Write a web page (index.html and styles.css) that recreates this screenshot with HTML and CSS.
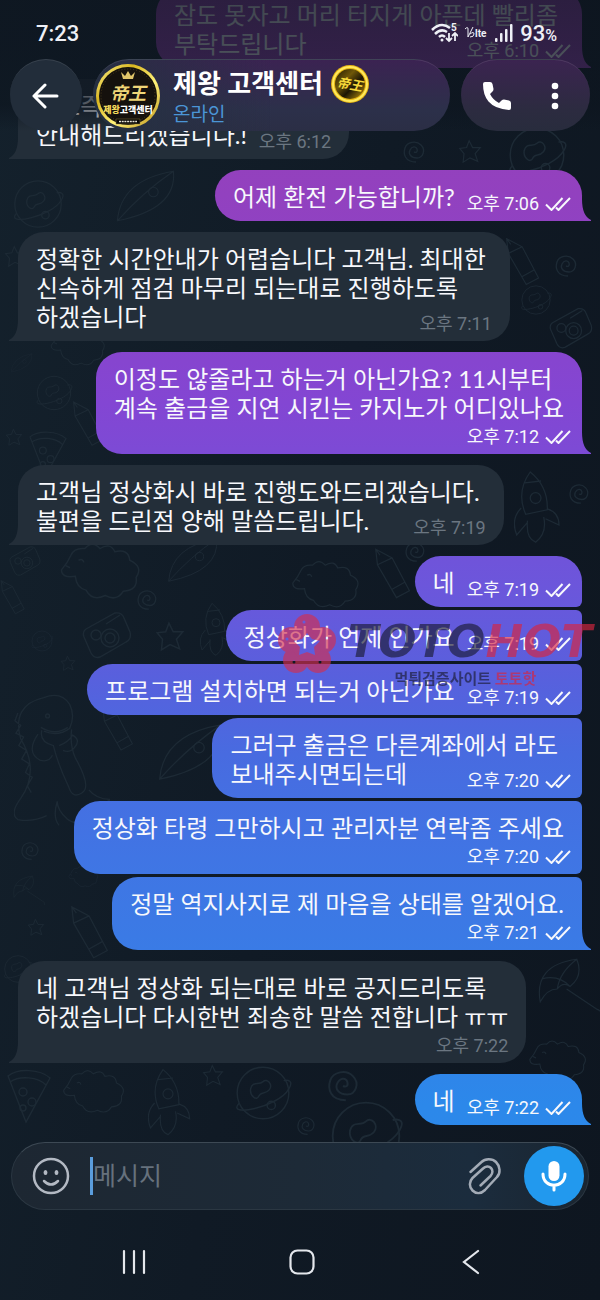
FILE: index.html
```html
<!DOCTYPE html>
<html lang="ko">
<head>
  <meta charset="UTF-8" />
  <meta name="viewport" content="width=device-width, initial-scale=1" />
  <title>제왕 고객센터</title>
  <link rel="stylesheet" href="styles.css">
</head>
<body>

<!-- Shared shapes -->
<svg class="defs" width="0" height="0" aria-hidden="true">
  <symbol id="ticks" viewBox="0 0 26 14">
    <path d="M1 7.500l5.500 5.500L17.500 1M11 10.500l2.500 2.500L25 1" fill="none" stroke="currentColor" stroke-width="2"/>
  </symbol>
  <symbol id="star" viewBox="0 0 28 28">
    <path d="M13 2l4 8 9 0-6 7 3 9-9-4-8 5 1-10-5-6 8-1z"/>
  </symbol>
  <symbol id="swirl" viewBox="0 0 24 24">
    <path d="M14 22C3 22 1 14 3 8s11-8 16-3 2 13-4 13-9-4-7-8 6-4 7-1-1 4-3 3"/>
  </symbol>
  <symbol id="pizza" viewBox="0 0 46 56">
    <path d="M2 8C12 0 34 1 44 10L20 54zM4 14c10-7 28-5 36 3"/><circle cx="17" cy="24" r="4"/><circle cx="26" cy="34" r="4"/><circle cx="17" cy="40" r="3"/>
  </symbol>
  <symbol id="pencil" viewBox="0 0 44 66">
    <path d="M2 2l2 18 22 38 15-8-20-38zM4 20l17-8M20 49l16-9M2 2l5 7"/>
  </symbol>
  <symbol id="planet" viewBox="0 0 60 56">
    <circle cx="30" cy="28" r="25"/><path d="M7 38c-14 14 38 4 48-14 5-8-1-9-5-8M18 24c2-8 8-3 12-7s10 3 6 8-8 1-10 6-9 0-8-7"/><circle cx="38" cy="40" r="4"/>
  </symbol>
  <symbol id="camera" viewBox="0 0 52 50">
    <path d="M5 19L34 3q7-1 9 5l6 14q2 7-4 10L19 47q-6 2-9-4L3 27q-2-5 2-8zM25 14l14-9"/><circle cx="15" cy="25" r="5"/><circle cx="29" cy="28" r="9"/><circle cx="29" cy="28" r="5"/>
  </symbol>
  <symbol id="sheep" viewBox="0 0 80 60">
    <path d="M24 8q7-8 14 0 10-6 14 3 13-3 14 8 13 6 6 16 2 12-12 13-6 10-17 4-12 6-18-5-9-2-10-13-13 2-13-6 6-7 9-14 3-7 13-6zM10 26l-4-2M18 19q4-2 5 2"/>
  </symbol>
  <symbol id="umbrella" viewBox="0 0 80 80">
    <path d="M5 55Q-3 12 48 5q8 20-8 32-8-6-15 3-12 0-20 15zM25 40Q28 20 48 5M7 28q20-5 33 9M36 40l36 24q8 3 4 9"/>
  </symbol>
  <symbol id="rocket" viewBox="0 0 60 84">
    <path d="M18 2Q2 24 13 49l24-5Q38 18 18 2zM8 42Q-4 54 3 72l12-14M37 43q13 4 13 18l-15-7M12 14l18-2M15 56q-2 20 9 24 13-10 9-28"/><circle cx="24" cy="31" r="6"/>
  </symbol>
  <symbol id="dino" viewBox="0 0 100 140">
    <path d="M31 4q18-7 27 7 6 12 0 25-12 9-27 3M7 109q20-29 0-62Q-3 12 31 4M4 20l-3 8 6 5-5 8 8 4-5 9 8 5-5 9 8 5-4 9 7 5-5 9 4 7M29 38q-3 12 12 16 5 20 16 43 4 13 14 6 10-6-7-36-6-13-4-30M47 54q10-4 14-11 9 5 2 13-5 6-12 3M25 42Q12 61 27 69q9 3 13-5M78 100q8 10 23 10-15 8-25 13-7 18-21 7-10-9-10-18-5 17 2 25M7 109q-12 16-3 22 16 3 30-4"/><circle cx="35" cy="23" r="2"/><path d="M28 35q15 9 28 0"/>
  </symbol>
  <symbol id="leaf" viewBox="0 0 80 70">
    <path d="M3 66Q7 15 73 4q5 47-70 62zM3 66q32-36 70-62"/><circle cx="48" cy="30" r="6"/>
  </symbol>
</svg>

<div class="screen">

  <!-- Wallpaper doodles -->
  <svg class="wallpaper" viewBox="0 0 600 1300" preserveAspectRatio="xMidYMid slice" aria-hidden="true">
    <use href="#planet" x="500" y="125" width="74" height="60"/>
    <use href="#star" x="458" y="139" width="24" height="24"/>
    <use href="#swirl" x="400" y="140" width="28" height="24"/>
    <use href="#planet" x="8" y="178" width="60" height="52"/>
    <use href="#leaf" x="112" y="168" width="70" height="56"/>
    <use href="#star" x="4" y="245" width="22" height="22"/>
    <use href="#pencil" x="505" y="235" width="36" height="58"/>
    <use href="#swirl" x="554" y="254" width="24" height="24"/>
    <use href="#planet" x="519" y="284" width="34" height="32"/>
    <use href="#camera" x="548" y="306" width="46" height="44"/>
    <use href="#sheep" x="34" y="325" width="90" height="44"/>
    <use href="#leaf" x="10" y="352" width="24" height="22"/>
    <use href="#planet" x="34" y="373" width="40" height="40"/>
    <use href="#star" x="5" y="428" width="18" height="18"/>
    <use href="#pizza" x="24" y="430" width="48" height="48"/>
    <use href="#pencil" x="72" y="395" width="34" height="62"/>
    <use href="#rocket" x="514" y="468" width="54" height="80"/>
    <use href="#swirl" x="568" y="482" width="22" height="24"/>
    <use href="#camera" x="8" y="545" width="34" height="32"/>
    <use href="#sheep" x="54" y="540" width="96" height="64"/>
    <use href="#leaf" x="152" y="536" width="84" height="48"/>
    <use href="#sheep" x="288" y="558" width="78" height="54"/>
    <use href="#pencil" x="374" y="545" width="38" height="62"/>
    <use href="#swirl" x="404" y="541" width="22" height="22"/>
    <use href="#swirl" x="136" y="588" width="22" height="24"/>
    <use href="#pencil" x="0" y="572" width="26" height="54"/>
    <use href="#camera" x="80" y="610" width="54" height="50"/>
    <use href="#star" x="155" y="621" width="30" height="30"/>
    <use href="#planet" x="30" y="624" width="24" height="34"/>
    <use href="#star" x="60" y="655" width="16" height="16"/>
    <use href="#rocket" x="200" y="596" width="40" height="68"/>
    <use href="#dino" x="14" y="692" width="96" height="138"/>
    <use href="#pencil" x="94" y="706" width="48" height="50"/>
    <use href="#leaf" x="157" y="716" width="70" height="72"/>
    <use href="#swirl" x="20" y="840" width="20" height="22"/>
    <use href="#umbrella" x="8" y="874" width="42" height="34"/>
    <use href="#sheep" x="68" y="860" width="32" height="34"/>
    <use href="#pencil" x="68" y="905" width="44" height="60"/>
    <use href="#star" x="27" y="918" width="18" height="18"/>
    <use href="#planet" x="2" y="952" width="32" height="34"/>
    <use href="#umbrella" x="536" y="953" width="68" height="72"/>
    <use href="#sheep" x="520" y="1038" width="78" height="46"/>
    <use href="#pizza" x="6" y="1068" width="46" height="56"/>
    <use href="#sheep" x="62" y="1062" width="66" height="60"/>
    <use href="#rocket" x="148" y="1066" width="50" height="74"/>
    <use href="#star" x="202" y="1064" width="22" height="22"/>
    <use href="#planet" x="232" y="1064" width="62" height="58"/>
    <use href="#swirl" x="326" y="1066" width="34" height="40"/>
    <use href="#planet" x="326" y="1098" width="80" height="76"/>
    <use href="#swirl" x="296" y="1116" width="20" height="20"/>
  </svg>

  <!-- Messages -->
  <main class="chat">
    <div class="bubble out tail overlap first">
      <p class="text">잠도 못자고 머리 터지게 아픈데 빨리좀<br>부탁드립니다</p>
      <span class="meta">오후 6:10 <svg class="ticks"><use href="#ticks"/></svg></span>
    </div>
    <div class="bubble in tail first">
      <p class="text">완료즉시<br>안내해드리겠습니다.!</p>
      <span class="meta">오후 6:12</span>
    </div>
    <div class="bubble out tail first">
      <p class="text">어제 환전 가능합니까?</p>
      <span class="meta">오후 7:06 <svg class="ticks"><use href="#ticks"/></svg></span>
    </div>
    <div class="bubble in tail overlap first">
      <p class="text">정확한 시간안내가 어렵습니다 고객님. 최대한<br>신속하게 점검 마무리 되는대로 진행하도록<br>하겠습니다</p>
      <span class="meta">오후 7:11</span>
    </div>
    <div class="bubble out tail below first">
      <p class="text">이정도 않줄라고 하는거 아닌가요? 11시부터<br>계속 출금을 지연 시킨는 카지노가 어디있나요</p>
      <span class="meta">오후 7:12 <svg class="ticks"><use href="#ticks"/></svg></span>
    </div>
    <div class="bubble in tail overlap first">
      <p class="text">고객님 정상화시 바로 진행도와드리겠습니다.<br>불편을 드린점 양해 말씀드립니다.</p>
      <span class="meta">오후 7:19</span>
    </div>
    <div class="bubble out first">
      <p class="text">네</p>
      <span class="meta">오후 7:19 <svg class="ticks"><use href="#ticks"/></svg></span>
    </div>
    <div class="bubble out">
      <p class="text">정상화가 언제 인가요</p>
      <span class="meta">오후 7:19 <svg class="ticks"><use href="#ticks"/></svg></span>
    </div>
    <div class="bubble out">
      <p class="text">프로그램 설치하면 되는거 아닌가요</p>
      <span class="meta">오후 7:19 <svg class="ticks"><use href="#ticks"/></svg></span>
    </div>
    <div class="bubble out overlap">
      <p class="text">그러구 출금은 다른계좌에서 라도<br>보내주시면되는데</p>
      <span class="meta">오후 7:20 <svg class="ticks"><use href="#ticks"/></svg></span>
    </div>
    <div class="bubble out below">
      <p class="text">정상화 타령 그만하시고 관리자분 연락좀 주세요</p>
      <span class="meta">오후 7:20 <svg class="ticks"><use href="#ticks"/></svg></span>
    </div>
    <div class="bubble out tail below">
      <p class="text">정말 역지사지로 제 마음을 상태를 알겠어요.</p>
      <span class="meta">오후 7:21 <svg class="ticks"><use href="#ticks"/></svg></span>
    </div>
    <div class="bubble in tail below first">
      <p class="text">네 고객님 정상화 되는대로 바로 공지드리도록<br>하겠습니다 다시한번 죄송한 말씀 전합니다 ㅠㅠ</p>
      <span class="meta">오후 7:22</span>
    </div>
    <div class="bubble out tail first">
      <p class="text">네</p>
      <span class="meta">오후 7:22 <svg class="ticks"><use href="#ticks"/></svg></span>
    </div>
  </main>

  <!-- Watermark -->
  <div class="watermark">
    <svg class="flower" viewBox="0 0 60 62" aria-hidden="true">
      <mask id="petal-hole">
        <rect width="60" height="62" fill="#fff"/>
        <path d="M30 20l5 6 8 2-6 6 1 8-8-3-8 3 1-8-6-6 8-2z" fill="#000"/>
        <circle cx="27" cy="9" r="1.500" fill="#000"/><circle cx="50" cy="25" r="1.500" fill="#000"/><circle cx="43" cy="49" r="1.500" fill="#000"/><circle cx="17" cy="49" r="1.500" fill="#000"/><circle cx="10" cy="26" r="1.500" fill="#000"/>
      </mask>
      <g mask="url(#petal-hole)">
        <circle cx="30" cy="14" r="13"/><circle cx="46" cy="27" r="13"/><circle cx="41" cy="47" r="13"/><circle cx="19" cy="47" r="13"/><circle cx="14" cy="27" r="13"/><circle cx="30" cy="33" r="14"/>
      </g>
    </svg>
    <div class="brand">
      <strong>TOTO<em>HOT</em></strong>
      <span>먹튀검증사이트 <em>토토핫</em></span>
    </div>
  </div>

  <!-- Status bar and chat header -->
  <header class="top">
    <div class="status">
      <span class="clock">7:23</span>
      <svg width="27" height="20" viewBox="0 0 27 20" fill="none" stroke="#eef0f6" aria-hidden="true">
        <path d="M1 7Q10-2 19 5M4 11q6-6 12-2M8 14q3-3 6 0" stroke-width="2.500"/>
        <circle cx="11" cy="17" r="1.500" fill="#eef0f6" stroke="none"/>
        <path d="M18 10v8m-3-3l3 3 3-3M24 18v-8m-3 3l3-3 3 3" stroke-width="1.800"/>
        <text x="20" y="8" class="tiny">5</text>
      </svg>
      <svg width="24" height="14" viewBox="0 0 24 14" aria-hidden="true">
        <path d="M1 3q3-3 3 0v8L9 1M6 8q4-3 4 0t-4 3" fill="none" stroke="#eef0f6"/>
        <text x="11" y="11" class="tiny">lte</text>
      </svg>
      <svg width="20" height="20" viewBox="0 0 20 20" fill="#eef0f6" aria-hidden="true">
        <rect x="1" y="15" width="2.500" height="4" rx="1"/><rect x="6" y="10" width="2.500" height="9" rx="1"/><rect x="11" y="6" width="2.500" height="13" rx="1"/><rect x="16" y="1" width="2.500" height="18" rx="1"/>
      </svg>
      <span class="battery">93<small>%</small></span>
    </div>

    <div class="header">
      <button class="pill back" aria-label="뒤로">
        <svg width="28" height="26" viewBox="0 0 28 26" fill="none" stroke="#fff" stroke-width="3" stroke-linecap="round" stroke-linejoin="round"><path d="M13 2L2 13l11 11M2 13h23"/></svg>
      </button>
      <div class="pill profile">
        <svg class="avatar" viewBox="0 0 64 64" aria-hidden="true">
          <defs>
            <linearGradient id="gold" x1="0" y1="0" x2="1" y2="1"><stop offset="0" stop-color="#fff79a"/><stop offset=".3" stop-color="#d9b51f"/><stop offset=".6" stop-color="#fff27a"/><stop offset="1" stop-color="#b98d13"/></linearGradient>
          </defs>
          <circle cx="32" cy="32" r="32" fill="url(#gold)"/>
          <circle cx="32" cy="32" r="29" fill="#15110d"/>
          <circle cx="32" cy="32" r="27" fill="none" stroke="#4a3b1c" stroke-dasharray="1 2"/>
          <path d="M27 15l-2-7 4 4 3-5 3 5 4-4-2 7z" fill="#e0c56a"/>
          <text x="32" y="36" class="hanja">帝王</text>
          <text x="32" y="49" class="seal"><tspan class="seal-gold">제왕</tspan>고객센터</text>
          <path d="M20 55h24v5H20z" fill="#050505" stroke="#8b7a42" stroke-width=".5"/>
          <path d="M23 57.500h18" stroke="#e8e4d8" stroke-width="1.500" stroke-dasharray="2 .7"/>
        </svg>
        <div class="who">
          <h1>제왕 고객센터
            <svg class="coin" viewBox="0 0 38 38" aria-hidden="true">
              <defs><linearGradient id="coin-face" x1="0" y1="0" x2="1" y2="1"><stop offset="0" stop-color="#1d1604"/><stop offset=".35" stop-color="#6f5708"/><stop offset=".6" stop-color="#1d1604"/><stop offset="1" stop-color="#c79c0d"/></linearGradient></defs>
              <circle cx="19" cy="19" r="19" fill="#e4b312"/>
              <circle cx="19" cy="19" r="17" fill="none" stroke="#ffe95c" stroke-width="2"/>
              <circle cx="19" cy="19" r="15" fill="url(#coin-face)"/>
              <text x="19" y="24" class="coin-text" transform="rotate(10 19 19)">帝王</text>
            </svg>
          </h1>
          <p>온라인</p>
        </div>
      </div>
      <div class="pill actions">
        <button aria-label="전화">
          <svg width="28" height="28" viewBox="0 0 28 28" fill="#fff"><path d="M2 0h5q2 0 2.500 2l1 5q0 1.500-1 2.500L7 12q3 6 9 9l2.500-2.500q1-1 2.500-1l5 1q2 .5 2 2.500v5q0 2-2 2Q12 27 5.500 19.500 0 13 0 2q0-2 2-2z"/></svg>
        </button>
        <button aria-label="메뉴">
          <svg width="8" height="28" viewBox="0 0 8 28" fill="#fff"><circle cx="4" cy="4" r="3.300"/><circle cx="4" cy="14" r="3.300"/><circle cx="4" cy="24" r="3.300"/></svg>
        </button>
      </div>
    </div>
  </header>

  <!-- Composer -->
  <form class="composer">
    <button type="button" aria-label="이모티콘">
      <svg width="38" height="38" viewBox="0 0 38 38" fill="none" stroke="#b3b9c3" stroke-width="2.500" stroke-linecap="round"><circle cx="19" cy="19" r="17"/><path d="M12 24q7 7 14 0"/><ellipse cx="13.500" cy="15.500" rx="1.200" ry="1.800" fill="#b3b9c3" stroke-width="1.500"/><ellipse cx="24.500" cy="15.500" rx="1.200" ry="1.800" fill="#b3b9c3" stroke-width="1.500"/></svg>
    </button>
    <span class="caret"></span>
    <input type="text" placeholder="메시지" aria-label="메시지">
    <button type="button" class="attach" aria-label="첨부">
      <svg width="34" height="38" viewBox="0 0 34 38" fill="none" stroke="#a3abb6" stroke-width="2.500" stroke-linecap="round"><path d="M2.500 15L13.500 5C17 1.500 24 1 28 5s5 11 1 15L17 33c-4 4-9 4-12.500.500s-3.500-9 0-12.500L15 11.500c2.500-2.500 6-2.500 8-.500s2 5.500-.5 8L12.500 28.500"/></svg>
    </button>
    <button type="button" class="mic" aria-label="음성 메시지">
      <svg width="26" height="32" viewBox="0 0 26 32"><rect x="7.500" y="1" width="11" height="20" rx="5.500" fill="#fff"/><path d="M2 14c0 15 22 15 22 0M13 25v5" fill="none" stroke="#fff" stroke-width="3" stroke-linecap="round"/></svg>
    </button>
  </form>

  <!-- System navigation -->
  <nav class="nav">
    <button aria-label="최근 앱"><svg width="24" height="26" viewBox="0 0 24 26" stroke="#e4e7ec" stroke-width="2.200" stroke-linecap="round"><path d="M2 2v22M12 2v22M22 2v22"/></svg></button>
    <button aria-label="홈"><svg width="26" height="26" viewBox="0 0 26 26" fill="none" stroke="#e4e7ec" stroke-width="2.200"><rect x="1.500" y="1.500" width="23" height="23" rx="7"/></svg></button>
    <button aria-label="뒤로 가기"><svg width="18" height="26" viewBox="0 0 18 26" fill="none" stroke="#e4e7ec" stroke-width="2.200" stroke-linecap="round"><path d="M16 2L2 13l14 11"/></svg></button>
  </nav>
</div>

</body>
</html>
```
FILE: styles.css
```css
* {
  box-sizing: border-box;
}
html, body {
  margin: 0;
  padding: 0;
  height: 100%;
  font-family: Roboto, "Noto Sans CJK KR", sans-serif;
  background-color: #111923;
}
button {
  display: flex;
  align-items: center;
  justify-content: center;
  padding: 0;
  border: none;
  background: none;
  color: inherit;
}
svg {
  display: block;
  flex-shrink: 0;
}
p, h1 {
  margin: 0;
}
.defs {
  position: absolute;
}
.screen {
  position: relative;
  display: flex;
  flex-direction: column;
  height: 100vh;
  overflow: hidden;
  background: linear-gradient(100deg, #14212c, #101a25 50%, #0e1620);
}
.wallpaper {
  position: absolute;
  inset: 0;
  width: 100%;
  height: 100%;
  fill: none;
  stroke: #1d2a35;
  stroke-width: 1.4;
}

/* Messages */
.chat {
  position: relative;
  flex: 1;
  min-height: 0;
  display: flex;
  flex-direction: column;
  justify-content: flex-end;
  padding: 0 18px 17px;
  gap: 3px;
}
.bubble {
  position: relative;
  display: flex;
  align-items: flex-end;
  flex-shrink: 0;
  gap: 12px;
  padding: 12px 18px 6px;
  border-radius: 26px;
  color: #f7f8fc;
}
.first {
  margin-top: 8px;
}
.in {
  align-self: flex-start;
  border-bottom-left-radius: 6px;
  background-color: #232e39;
}
.out {
  align-self: flex-end;
  padding-right: 11px;
  border-top-right-radius: 6px;
  border-bottom-right-radius: 6px;
}
.out.first {
  border-top-right-radius: 26px;
}
.out, .out.tail::after {
  background-image: linear-gradient(#9a3fb4, #9241bf 15%, #8346d3 31%, #6c56db 45%, #5860dd 52%, #486be0 58%, #4075e4 66%, #3b7ae5 72%, #2c88ea 85%, #2a8aeb);
  background-attachment: fixed;
}
.tail.in {
  border-bottom-left-radius: 0;
}
.tail.out {
  border-bottom-right-radius: 0;
}
.tail::after {
  content: "";
  position: absolute;
  bottom: 0;
  width: 9px;
  height: 22px;
}
.out.tail::after {
  left: 100%;
  clip-path: path("M0 0Q0 17 9 21V22H0Z");
}
.in.tail::after {
  right: 100%;
  background-color: #232e39;
  clip-path: path("M9 0Q9 17 0 21V22H9Z");
}
.text {
  margin-bottom: 4px;
  font-family: Lato, "Noto Sans CJK KR", sans-serif;
  font-size: 24px;
  line-height: 29px;
  white-space: nowrap;
}
.meta {
  display: flex;
  align-items: center;
  gap: 6px;
  font-size: 18px;
  line-height: 22px;
  white-space: nowrap;
}
.in .meta {
  color: #6b7681;
}
.ticks {
  width: 26px;
  height: 14px;
}
.overlap {
  display: grid;
}
.overlap .text, .overlap .meta {
  grid-area: 1 / 1;
}
.overlap .text {
  margin-right: 6px;
}
.out.overlap .text {
  margin-right: 13px;
}
.overlap .meta {
  place-self: end;
}
.below {
  flex-direction: column;
  gap: 0;
}
.in.below .text {
  align-self: flex-start;
}
.out.below .text {
  margin-right: 7px;
}

/* Watermark */
.watermark {
  position: absolute;
  top: 613px;
  right: 8px;
  display: flex;
  gap: 10px;
  opacity: 0.65;
}
.flower {
  width: 60px;
  height: 62px;
  fill: #d32f4f;
}
.brand {
  display: flex;
  flex-direction: column;
  color: #1b1c35;
}
.brand strong {
  font: italic bold 45px/58px "DejaVu Sans", sans-serif;
}
.brand span {
  margin-left: 47px;
  font-size: 15px;
  font-weight: 700;
  line-height: 16px;
}
.brand em {
  color: #d8253f;
  font-style: inherit;
}

/* Header */
.top {
  position: absolute;
  top: 0;
  left: 0;
  right: 0;
  background: linear-gradient(rgba(13, 21, 31, 0.78), rgba(13, 21, 31, 0.7) 80%, rgba(13, 21, 31, 0));
}
.status {
  display: flex;
  align-items: center;
  gap: 6px;
  height: 59px;
  padding: 7px 43px 0 36px;
  color: #eef0f6;
  font-size: 22px;
  font-weight: 500;
}
.clock {
  margin-right: auto;
}
.battery small {
  font-size: 16px;
}
.tiny {
  fill: #eef0f6;
  stroke: none;
  font-size: 10px;
  font-weight: 700;
}
.header {
  display: flex;
  gap: 11px;
  padding: 0 10px;
}
.pill {
  display: flex;
  align-items: center;
  height: 72px;
  border-radius: 36px;
  border-top: 1px solid rgba(255, 255, 255, 0.1);
  background-color: #222d3a;
}
.back {
  width: 72px;
  justify-content: center;
}
.profile {
  flex: 1;
  gap: 13px;
  padding-left: 3px;
  background: linear-gradient(90deg, rgba(36, 48, 64, 0.9), rgba(36, 48, 64, 0) 50%), linear-gradient(#3b2352, #2c304a 70%, #2b2e45);
}
.avatar {
  width: 64px;
  height: 64px;
}
.hanja {
  fill: #f0d678;
  font: italic 700 18px "Noto Sans CJK TC", serif;
  text-anchor: middle;
}
.seal {
  fill: #fff;
  font-size: 9px;
  font-weight: 900;
  text-anchor: middle;
}
.seal-gold {
  fill: #f3d95c;
}
.who h1 {
  display: flex;
  align-items: center;
  gap: 8px;
  color: #fff;
  font-size: 26px;
  font-weight: 700;
  line-height: 38px;
  white-space: nowrap;
}
.who p {
  color: #4b95d6;
  font-size: 19px;
  line-height: 24px;
}
.coin {
  width: 38px;
  height: 38px;
}
.coin-text {
  fill: #f6d83a;
  font: italic 700 13px "Noto Sans CJK TC", serif;
  text-anchor: middle;
}
.actions {
  width: 129px;
  background: linear-gradient(#3b2450, #2c2b40 70%, #282c3d);
}
.actions button {
  width: 46px;
  height: 72px;
}
.actions button:first-child {
  width: 71px;
}

/* Composer */
.composer {
  position: relative;
  display: flex;
  align-items: center;
  height: 68px;
  margin: 0 11px;
  padding: 0 4px 0 20px;
  border: 1px solid #2b3742;
  border-top-color: #3d4954;
  border-radius: 34px;
  background: linear-gradient(90deg, #1d2732, #1d2a37 50%, #1b2c3d 80%, #1a2530);
}
.caret {
  width: 3px;
  height: 38px;
  margin-left: 20px;
  background-color: #5a9ddd;
}
.composer input {
  flex: 1;
  min-width: 0;
  padding: 0;
  border: none;
  outline: none;
  background: none;
  color: #fff;
  font: inherit;
  font-size: 25px;
}
.composer input::placeholder {
  color: #66717d;
}
.attach {
  margin-right: 22px;
}
.mic {
  width: 60px;
  height: 60px;
  border-radius: 50%;
  background-color: #2299ee;
}

/* System navigation */
.nav {
  position: relative;
  display: flex;
  height: 90px;
  padding: 14px 45px 0 50px;
}
.nav button {
  flex: 1;
}
```
